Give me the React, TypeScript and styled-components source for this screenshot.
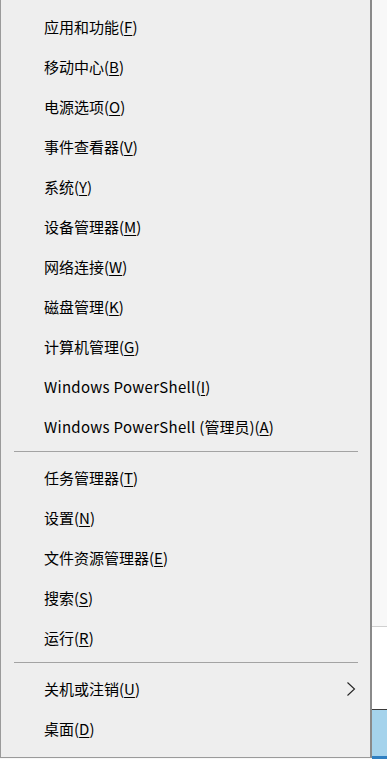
import React from 'react';
import styled, { createGlobalStyle } from 'styled-components';

const GlobalStyle = createGlobalStyle`
  html, body {
    margin: 0;
    padding: 0;
    height: 100%;
    overflow: hidden;
  }
  body {
    font-family: "Noto Sans CJK SC", "Noto Sans", sans-serif;
    -webkit-font-smoothing: antialiased;
  }
`;

const Screen = styled.div`
  display: flex;
  width: 387px;
  height: 759px;
  background: #f7f7f7;
`;

const Menu = styled.nav`
  width: 372px;
  height: 758px;
  box-sizing: border-box;
  display: flex;
  flex-direction: column;
  padding: 7px 0 0;
  background: #eeeeee;
  border-left: 1px solid #9a9a9a;
  border-right: 2px solid #8a8a8a;
  border-bottom: 1px solid #9a9a9a;
`;

const Item = styled.div`
  height: 40px;
  flex: none;
  display: flex;
  align-items: center;
  justify-content: space-between;
  padding: 0 14px 0 43px;
  font-size: 15px;
  color: #000;
  white-space: nowrap;
`;

const Label = styled.span`
  line-height: 20px;

  u {
    text-decoration-thickness: 1px;
    text-underline-offset: 2px;
  }
`;

// Latin glyphs of the CJK font run a little narrower than Segoe UI
const Latin = styled.span`
  letter-spacing: 0.3px;
`;

const Separator = styled.hr`
  flex: none;
  margin: 4px 12px 6px 13px;
  border: 0;
  border-top: 1px solid #a3a3a3;
  height: 0;
`;

const Backdrop = styled.div`
  flex: 1;
  display: flex;
  flex-direction: column;
`;

const Pane = styled.div<{ $h?: number; $bg: string; $line?: string }>`
  flex: ${p => (p.$h ? 'none' : '1')};
  height: ${p => (p.$h ? `${p.$h}px` : 'auto')};
  background: ${p => p.$bg};
  border-top: ${p => (p.$line ? `1px solid ${p.$line}` : 'none')};
`;

const Chevron = () => (
  <svg width="10" height="16" viewBox="0 0 10 16" fill="none">
    <path d="M1.5 1.5 L8.5 8 L1.5 14.5" stroke="#222" strokeWidth="1.1" />
  </svg>
);

type Entry = { text: string; latin?: string; key: string; sub?: boolean } | 'sep';

const entries: Entry[] = [
  { text: '应用和功能', key: 'F' },
  { text: '移动中心', key: 'B' },
  { text: '电源选项', key: 'O' },
  { text: '事件查看器', key: 'V' },
  { text: '系统', key: 'Y' },
  { text: '设备管理器', key: 'M' },
  { text: '网络连接', key: 'W' },
  { text: '磁盘管理', key: 'K' },
  { text: '计算机管理', key: 'G' },
  { latin: 'Windows PowerShell', text: '', key: 'I' },
  { latin: 'Windows PowerShell ', text: '(管理员)', key: 'A' },
  'sep',
  { text: '任务管理器', key: 'T' },
  { text: '设置', key: 'N' },
  { text: '文件资源管理器', key: 'E' },
  { text: '搜索', key: 'S' },
  { text: '运行', key: 'R' },
  'sep',
  { text: '关机或注销', key: 'U', sub: true },
  { text: '桌面', key: 'D' },
];

export default function App() {
  return (
    <>
      <GlobalStyle />
      <Screen>
        <Menu>
          {entries.map((e, i) =>
            e === 'sep' ? (
              <Separator key={i} />
            ) : (
              <Item key={i}>
                <Label>
                  {e.latin && <Latin>{e.latin}</Latin>}
                  {e.text}(<u>{e.key}</u>)
                </Label>
                {e.sub && <Chevron />}
              </Item>
            )
          )}
        </Menu>
        <Backdrop>
          <Pane $h={626} $bg="#f8f8f8" />
          <Pane $h={82} $bg="#ffffff" $line="#d0d0d0" />
          <Pane $bg="#a5d3ec" $line="#3a3a3a" />
          <Pane $h={3} $bg="#2f7fc1" />
        </Backdrop>
      </Screen>
    </>
  );
}
